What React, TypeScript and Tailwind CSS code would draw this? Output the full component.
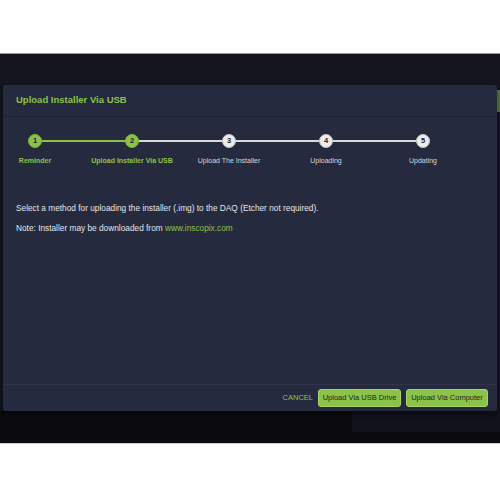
import React from "react";

const steps = ["Reminder", "Upload Installer Via USB", "Upload The Installer", "Uploading", "Updating"];
const current = 2;

function Stepper() {
  return (
    <div className="flex items-start pl-[25px] pr-[67px] pt-[17px]">
      {steps.map((label, i) => {
        const n = i + 1;
        const done = n <= current;
        return (
          <React.Fragment key={label}>
            {i > 0 && (
              <div
                className={
                  "mt-[6px] h-[2px] flex-1 " + (n <= current ? "bg-[#8bc34a]" : "bg-[#d9d9d9]")
                }
              />
            )}
            <div className="flex w-[14px] flex-col items-center">
              <div
                className={
                  "flex h-[14px] w-[14px] items-center justify-center rounded-full border-[1.5px] text-[7.5px] font-bold text-[#1d2130] " +
                  (done ? "border-[#7fb33f] bg-[#8bc34a]" : "border-[#c9c9c9] bg-[#ececec]")
                }
              >
                {n}
              </div>
              <div className="flex w-0 justify-center pt-[9px]">
                <span
                  className={
                    "whitespace-nowrap text-[7px] leading-none " +
                    (done ? "font-bold text-[#8bc34a]" : "text-[#d6d8de]")
                  }
                >
                  {label}
                </span>
              </div>
            </div>
          </React.Fragment>
        );
      })}
    </div>
  );
}

export default function App() {
  return (
    <div className="flex h-[500px] w-[500px] flex-col bg-white font-['Liberation_Sans',Arial,sans-serif]">
      <div className="h-[54px] border-b border-[#9a9a9a] bg-white" />
      <div className="relative flex h-[389px] flex-col bg-[#14151e]">
        <div className="absolute right-0 top-[36px] h-[22px] w-[3px] bg-[#5a7a2e]" />
        <div className="h-[31px]" />
        <div className="relative mx-[3px] flex h-[326px] flex-col rounded-[3px] bg-[#262a3e] shadow-[0_2px_6px_rgba(0,0,0,0.5)]">
          <div className="flex h-[32px] items-center border-b border-[#1e2131] px-[13px]">
            <h1 className="text-[9.5px] font-bold text-[#8bc34a]">Upload Installer Via USB</h1>
          </div>
          <div className="flex-1">
            <Stepper />
            <div className="px-[13px] pt-[38px] text-[8.3px] text-[#e4e6ea]">
              <p>Select a method for uploading the installer (.img) to the DAQ (Etcher not required).</p>
              <p className="mt-[8px]">
                Note: Installer may be downloaded from{" "}
                <span className="text-[#8bc34a]">www.inscopix.com</span>
              </p>
            </div>
          </div>
          <div className="flex h-[27px] items-center justify-end gap-[5px] border-t border-[#2f3448] pr-[9px]">
            <button className="text-[7.5px] text-[#8bc34a]">CANCEL</button>
            <button className="h-[18px] w-[83px] rounded-[3px] border border-[#a6d66a] bg-[#8bc34a] text-[7.5px] text-[#1f2618]">
              Upload Via USB Drive
            </button>
            <button className="h-[18px] w-[82px] rounded-[3px] border border-[#a6d66a] bg-[#8bc34a] text-[7.5px] text-[#1f2618]">
              Upload Via Computer
            </button>
          </div>
        </div>
        <div className="flex flex-1 justify-end bg-[#0b0b0d]">
          <div className="h-[21px] w-[148px] bg-[#11121a]" />
        </div>
      </div>
      <div className="flex-1 border-t border-[#cfcfcf] bg-white" />
    </div>
  );
}
